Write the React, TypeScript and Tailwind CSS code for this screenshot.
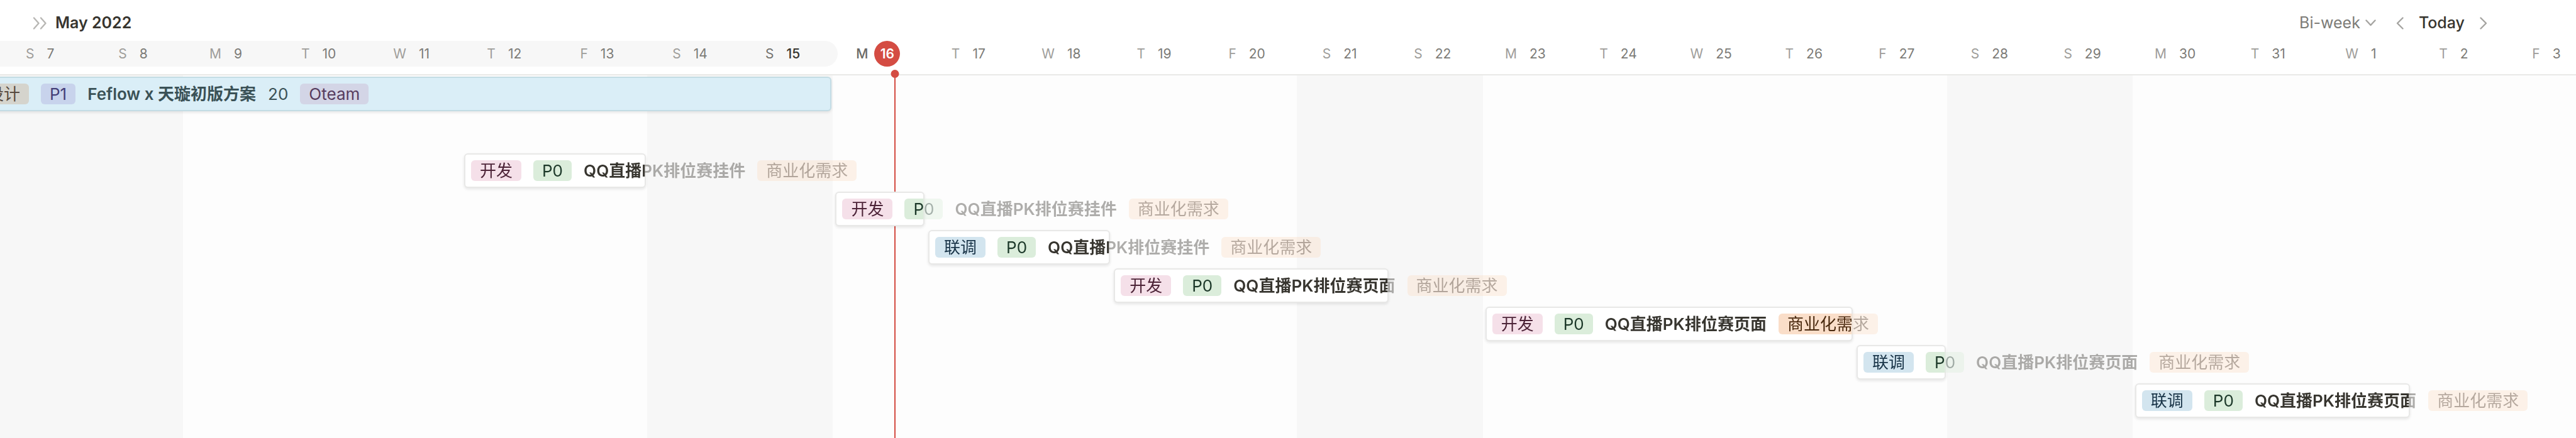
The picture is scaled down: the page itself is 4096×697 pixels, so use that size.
import { clsx } from "clsx";

type Tag = { kind: "tag"; text: string; tone: string };
type Label = { kind: "title" | "plain"; text: string };
type Part = Tag | Label;

const DAYS = [
  "S 7", "S 8", "M 9", "T 10", "W 11", "T 12", "F 13", "S 14", "S 15", "M 16", "T 17", "W 18", "T 19", "F 20",
  "S 21", "S 22", "M 23", "T 24", "W 25", "T 26", "F 27", "S 28", "S 29", "M 30", "T 31", "W 1", "T 2", "F 3",
].map((d) => {
  const [letter, date] = d.split(" ");
  return { letter, date };
});

const PINK = "bg-[#f5e0e9] text-[#4c2337]";
const GREEN = "bg-[#dbeddb] text-[#1c3829]";
const BLUE = "bg-[#d3e5ef] text-[#183347]";
const ORANGE = "bg-[#fadec9] text-[#49290e]";

const task = (stage: string, title: string): Part[] => [
  { kind: "tag", text: stage, tone: stage === "开发" ? PINK : BLUE },
  { kind: "tag", text: "P0", tone: GREEN },
  { kind: "title", text: title },
  { kind: "tag", text: "商业化需求", tone: ORANGE },
];

const WIDGET = "QQ直播PK排位赛挂件";
const PAGE = "QQ直播PK排位赛页面";

const BARS: { place: string; parts: Part[] }[] = [
  { place: "row-start-3 col-start-6 col-span-2", parts: task("开发", WIDGET) },
  { place: "row-start-4 col-start-10 col-span-1", parts: task("开发", WIDGET) },
  { place: "row-start-5 col-start-11 col-span-2", parts: task("联调", WIDGET) },
  { place: "row-start-6 col-start-13 col-span-3", parts: task("开发", PAGE) },
  { place: "row-start-7 col-start-17 col-span-4", parts: task("开发", PAGE) },
  { place: "row-start-8 col-start-21 col-span-1", parts: task("联调", PAGE) },
  { place: "row-start-9 col-start-24 col-span-3", parts: task("联调", PAGE) },
];

const PROJECT: Part[] = [
  { kind: "tag", text: "设计", tone: "bg-[#d5d4cd] text-[#574a40]" },
  { kind: "tag", text: "P1", tone: "bg-[#c8d3ec] text-[#443f78]" },
  { kind: "title", text: "Feflow x 天璇初版方案" },
  { kind: "plain", text: "20" },
  { kind: "tag", text: "Oteam", tone: "bg-[#d3d5e6] text-[#573d5f]" },
];

const TRACK = "-ml-1 grid w-[100.9%] grid-cols-28";

function Parts({ parts }: { parts: Part[] }) {
  return (
    <>
      {parts.map((p) => (
        <span
          key={p.text}
          className={clsx(
            "leading-[33px]",
            p.kind === "tag" && "rounded-md px-[14px]",
            p.kind === "tag" && p.tone,
            p.kind === "title" && "font-semibold",
          )}
        >
          {p.text}
        </span>
      ))}
    </>
  );
}

function Chevron({ d, className, box }: { d: string; className: string; box: string }) {
  return (
    <svg viewBox={box} className={className} fill="none" stroke="currentColor" strokeWidth="2.4" aria-hidden="true">
      <path d={d} strokeLinecap="round" strokeLinejoin="round" />
    </svg>
  );
}

function Toolbar() {
  return (
    <div className="flex h-[65px] items-center pt-2 pr-[141px] pl-[52px] text-[25px]">
      <button type="button" aria-label="Expand" className="mr-[13px] text-[#b8b7b4]">
        <Chevron box="0 0 23 20" className="h-5 w-[23px]" d="M2 1.5 9.5 10 2 18.5M13 1.5 20.5 10 13 18.5" />
      </button>
      <h1 className="font-semibold">May 2022</h1>
      <div className="ml-auto flex items-center">
        <label className="mr-8 flex items-center gap-2 text-[#7d7c78]">
          <select aria-label="Time scale" defaultValue="Bi-week" className="field-sizing-content appearance-none bg-transparent">
            <option>Bi-week</option>
          </select>
          <Chevron box="0 0 17 11" className="h-[11px] w-[17px] text-[#a5a4a1]" d="M1.5 1.5 8.5 9 15.5 1.5" />
        </label>
        <button type="button" aria-label="Previous" className="text-[#a5a4a1]">
          <Chevron box="0 0 12 20" className="h-5 w-3" d="M10.5 1.5 2 10 10.5 18.5" />
        </button>
        <button type="button" className="mx-6 font-medium">
          Today
        </button>
        <button type="button" aria-label="Next" className="text-[#a5a4a1]">
          <Chevron box="0 0 12 20" className="h-5 w-3" d="M1.5 1.5 10 10 1.5 18.5" />
        </button>
      </div>
    </div>
  );
}

function DayHeader() {
  return (
    <div className="overflow-x-clip border-b-2 border-[#e9e9e7] pb-3">
      <div className={TRACK}>
        <div className="col-start-1 col-end-10 row-start-1 -mr-2 rounded-r-full bg-[#f7f7f7]" />
        {DAYS.map(({ letter, date }, i) => {
          const today = i === 9;
          return (
            <div
              key={date}
              style={{ gridColumnStart: i + 1 }}
              className={clsx(
                "row-start-1 flex h-[41px] items-center justify-center gap-2.5 text-[21px]",
                today ? "pr-1 font-medium text-[#6a6965]" : i === 8 ? "pr-0.5 text-[#73726e]" : "pr-0.5 text-[#9e9d9a]",
              )}
            >
              <span>{letter}</span>
              <span
                className={clsx(
                  today && "grid size-[41px] place-items-center rounded-full bg-[#d44c43] font-semibold text-white",
                  !today && "px-2.5",
                  !today && (i === 8 ? "font-medium text-[#37352f]" : "text-[#7c7b77]"),
                )}
              >
                {date}
              </span>
            </div>
          );
        })}
      </div>
    </div>
  );
}

function Board() {
  return (
    <div className="grid grow grid-cols-1 overflow-x-clip bg-[#fdfdfd]">
      <div className={clsx(TRACK, "col-start-1 row-start-1")}>
        {DAYS.map(({ letter, date }, i) => (
          <div key={date} className={clsx("relative", letter === "S" && "bg-[#f7f7f7]")}>
            {i === 9 && (
              <>
                <div className="absolute inset-y-0 left-2/3 w-0.5 -translate-x-1/2 bg-[#d44c43]" />
                <div className="absolute -top-[9px] left-2/3 size-[13px] -translate-x-1/2 rounded-full bg-[#d44c43]" />
              </>
            )}
          </div>
        ))}
      </div>
      <div className={clsx(TRACK, "col-start-1 row-start-1 auto-rows-[61px] content-start pt-0.5 text-[26px]")}>
        <div className="z-10 col-start-1 col-end-10 row-start-1 mr-0.5 flex h-[55px] items-center rounded-md rounded-l-none border-2 border-l-0 border-[#c3dce4] bg-[#daeef7] text-[#3a5156] shadow-[0_2px_4px_rgba(15,15,15,0.1)]">
          <div className="-ml-[30px] flex items-center gap-[19px] whitespace-nowrap">
            <Parts parts={PROJECT} />
          </div>
        </div>
        {BARS.map(({ place, parts }) => (
          <div
            key={place}
            className={clsx(
              place,
              "@container z-10 mr-0.5 ml-1 h-[55px] rounded-md border-2 border-[#e8e8e7] bg-white shadow-[0_2px_4px_rgba(15,15,15,0.1)]",
            )}
          >
            <div className="flex h-full w-max items-center gap-[19px] pl-[9px] whitespace-nowrap [mask-image:linear-gradient(to_right,black_100cqw,rgb(0_0_0/0.4)_100cqw)]">
              <Parts parts={parts} />
            </div>
          </div>
        ))}
      </div>
    </div>
  );
}

export default function App() {
  return (
    <main className="flex min-h-screen flex-col overflow-x-clip bg-white font-[Inter,'Noto_Sans_CJK_SC',sans-serif] text-[#37352f]">
      <Toolbar />
      <DayHeader />
      <Board />
    </main>
  );
}
